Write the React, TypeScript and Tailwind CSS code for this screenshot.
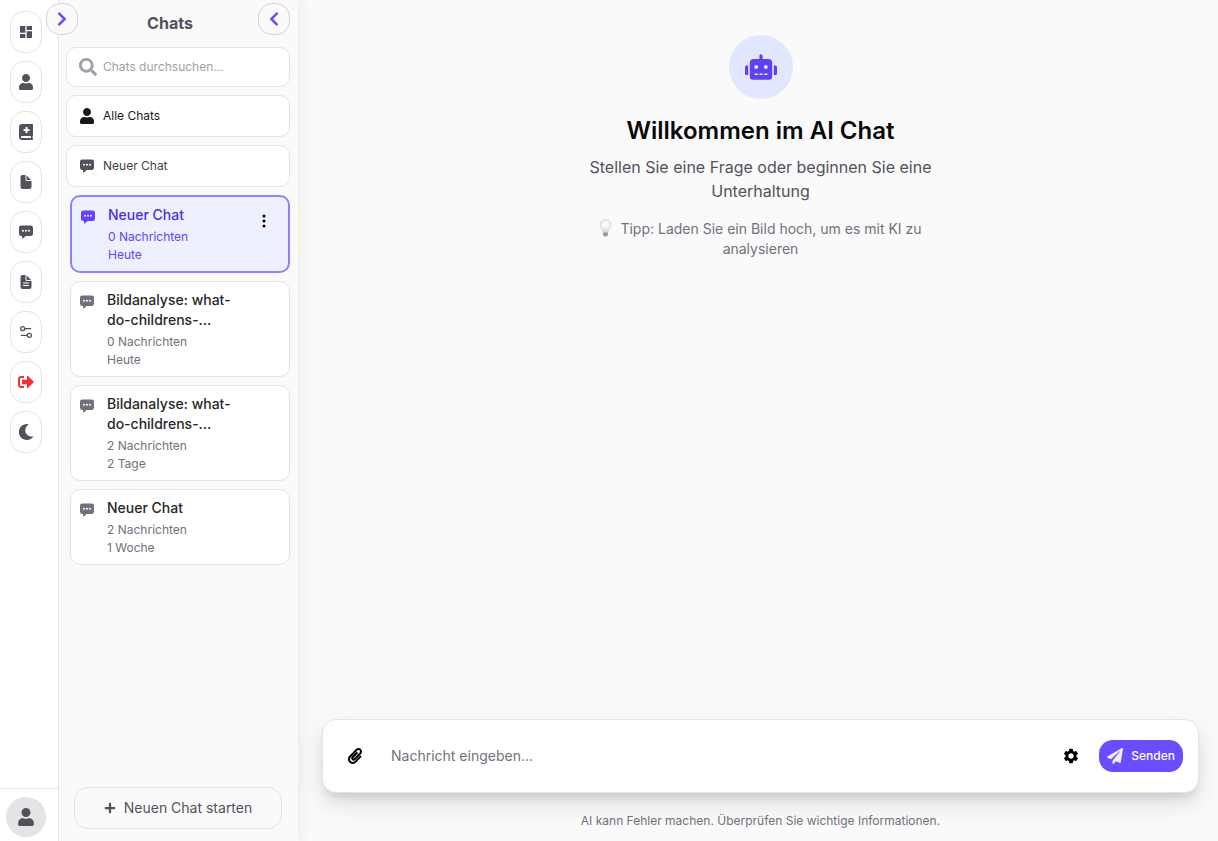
import { useState, type ComponentType } from "react";
import { Settings2 } from "lucide-react";
import { BsThreeDotsVertical } from "react-icons/bs";
import {
  FaBookMedical,
  FaChevronLeft,
  FaChevronRight,
  FaMoon,
  FaPaperclip,
  FaPaperPlane,
  FaPlus,
  FaRobot,
  FaSearch,
  FaSignOutAlt,
  FaUser,
} from "react-icons/fa";
import { IoChatboxEllipses, IoDocument, IoDocumentText } from "react-icons/io5";
import { MdDashboard, MdSettings } from "react-icons/md";

type Icon = ComponentType<{ className?: string }>;

const navItems: { label: string; icon: Icon; color: string }[] = [
  { label: "Dashboard", icon: MdDashboard, color: "text-[#52525c]" },
  { label: "Profil", icon: FaUser, color: "text-[#52525c]" },
  { label: "Bibliothek", icon: FaBookMedical, color: "text-[#52525c]" },
  { label: "Dateien", icon: IoDocument, color: "text-[#52525c]" },
  { label: "Chats", icon: IoChatboxEllipses, color: "text-[#52525c]" },
  { label: "Dokumente", icon: IoDocumentText, color: "text-[#52525c]" },
  { label: "Einstellungen", icon: Settings2, color: "text-[#52525c]" },
  { label: "Abmelden", icon: FaSignOutAlt, color: "text-[#fb2c36]" },
  { label: "Dunkler Modus", icon: FaMoon, color: "text-[#52525c]" },
];

const chats = [
  { id: 1, title: "Neuer Chat", count: "0 Nachrichten", age: "Heute", active: true },
  { id: 2, title: "Bildanalyse: what-do-childrens-...", count: "0 Nachrichten", age: "Heute", active: false },
  { id: 3, title: "Bildanalyse: what-do-childrens-...", count: "2 Nachrichten", age: "2 Tage", active: false },
  { id: 4, title: "Neuer Chat", count: "2 Nachrichten", age: "1 Woche", active: false },
];

function Rail() {
  return (
    <div className="relative z-20 flex w-[58px] shrink-0 flex-col bg-white">
      <nav className="flex flex-1 flex-col gap-2 pt-[11px] pl-[10px]">
        {navItems.map(({ label, icon: NavIcon, color }) => (
          <button
            key={label}
            type="button"
            aria-label={label}
            className={`flex h-[42px] w-8 items-center justify-center rounded-[14px] border border-zinc-200 bg-white ${color}`}
          >
            <NavIcon className="size-4 shrink-0" />
          </button>
        ))}
      </nav>
      <div className="border-t border-zinc-200 pt-2 pb-1 pl-[6px]">
        <button
          type="button"
          aria-label="Konto"
          className="flex size-10 items-center justify-center rounded-full bg-zinc-200 text-[#52525c]"
        >
          <FaUser className="size-[18px]" />
        </button>
      </div>
      <button
        type="button"
        aria-label="Navigation ausklappen"
        className="absolute top-[3px] left-[46px] flex size-8 items-center justify-center rounded-[14px] border border-zinc-300 bg-[#fafafa]"
      >
        <FaChevronRight className="size-4 text-[#6a4dff]" />
      </button>
    </div>
  );
}

function ChatCard({ title, count, age, active }: (typeof chats)[number]) {
  const frame = active ? "border-2 border-[#8b80ff] bg-[#edf1ff]" : "border border-zinc-200 bg-white";
  return (
    <li className={`relative rounded-[10px] px-2 pt-2 pb-[7px] ${frame}`}>
      <button type="button" className="flex w-full items-start gap-3 pr-8 text-left">
        <IoChatboxEllipses
          className={`mt-1 size-4 shrink-0 ${active ? "text-[#6644f5]" : "text-[#71717b]"}`}
        />
        <span className="min-w-0">
          <span className={`block text-sm font-medium ${active ? "text-[#4f2ee0]" : "text-[#27272a]"}`}>
            {title}
          </span>
          <span className={`mt-[3px] block text-xs leading-[18px] ${active ? "text-[#6644f5]" : "text-[#71717b]"}`}>
            <span className="block">{count}</span>
            <span className="block">{age}</span>
          </span>
        </span>
      </button>
      {active && (
        <button
          type="button"
          aria-label="Chat-Optionen"
          className="absolute top-2 right-2 flex size-8 items-center justify-center text-black"
        >
          <BsThreeDotsVertical className="size-4" />
        </button>
      )}
    </li>
  );
}

function ChatPanel() {
  const [query, setQuery] = useState("");
  return (
    <aside className="relative z-10 flex w-[240px] shrink-0 flex-col border-l border-zinc-200 bg-[#fafafa] pr-2 pl-[7px] shadow-[4px_0_12px_rgba(0,0,0,0.06)]">
      <header className="relative flex h-[47px] items-center justify-center pr-4 pb-0.5">
        <h2 className="text-base font-bold text-[#52525c]">Chats</h2>
        <button
          type="button"
          aria-label="Chatliste einklappen"
          className="absolute top-[3px] right-0 flex size-8 items-center justify-center rounded-[14px] border border-zinc-300 bg-[#fafafa]"
        >
          <FaChevronLeft className="size-4 text-[#6a4dff]" />
        </button>
      </header>
      <div className="flex flex-col gap-2">
        <label className="flex h-10 items-center gap-[6px] rounded-[10px] border border-zinc-200 bg-white px-3">
          <FaSearch className="size-[18px] shrink-0 text-[#9f9fa9]" />
          <input
            type="search"
            aria-label="Chats durchsuchen"
            placeholder="Chats durchsuchen..."
            value={query}
            onChange={(e) => setQuery(e.target.value)}
            className="w-full min-w-0 bg-transparent text-xs outline-none placeholder:text-[#9f9fa9]"
          />
        </label>
        <button
          type="button"
          className="flex h-[42px] items-center gap-2 rounded-[10px] border border-zinc-200 bg-white px-3 text-xs text-[#18181b]"
        >
          <FaUser className="size-4" />
          Alle Chats
        </button>
        <button
          type="button"
          className="flex h-[42px] items-center gap-2 rounded-[10px] border border-zinc-200 bg-white px-3 text-xs text-[#3f3f46]"
        >
          <IoChatboxEllipses className="size-4 text-[#52525c]" />
          Neuer Chat
        </button>
      </div>
      <ul className="flex flex-1 flex-col gap-2 pt-2 pl-1">
        {chats.map((chat) => (
          <ChatCard key={chat.id} {...chat} />
        ))}
      </ul>
      <div className="px-2 pb-3">
        <button
          type="button"
          className="flex h-[42px] w-full items-center justify-center gap-2 rounded-[14px] border border-zinc-200 text-sm text-[#52525c]"
        >
          <FaPlus className="size-3" />
          Neuen Chat starten
        </button>
      </div>
    </aside>
  );
}

function LightBulb() {
  return (
    <svg viewBox="0 0 14 20" className="mr-2 inline-block h-[18px] w-[13px] align-[-3px]" aria-hidden="true">
      <defs>
        <radialGradient id="glass" cx="50%" cy="40%" r="60%">
          <stop offset="0" stopColor="#ffffff" />
          <stop offset="0.6" stopColor="#f0f0f0" />
          <stop offset="1" stopColor="#cfcfcf" />
        </radialGradient>
      </defs>
      <path
        d="M7 .6C3.500.6.9 3.200.9 6.500c0 2.300 1.100 3.700 2.100 5.100.7 1 1.300 2 1.400 3.200h5.200c.1-1.200.7-2.200 1.400-3.200 1-1.400 2.100-2.800 2.100-5.100C13.100 3.200 10.500.6 7 .6z"
        fill="url(#glass)"
        stroke="#d0d0d0"
        strokeWidth="0.6"
      />
      <path d="M5.400 8.500l.9 6h1.400l.9-6" fill="none" stroke="#d8d8d8" strokeWidth="0.5" />
      <path d="M4.400 14.800h5.200v3c0 .6-.5 1-1 1.200L7.800 19.600H6.200L5.400 19c-.5-.2-1-.6-1-1.200z" fill="#a9a9a9" />
      <path d="M4.400 16.200h5.200M4.600 17.800h4.800" stroke="#7c7c7c" strokeWidth="0.6" />
    </svg>
  );
}

function Conversation() {
  const [message, setMessage] = useState("");
  return (
    <main className="flex min-w-0 flex-1 flex-col bg-[#fafafa] pr-[19px] pl-6">
      <section className="flex flex-1 flex-col items-center pt-[35px] text-center">
        <div className="flex size-16 items-center justify-center rounded-full bg-[#e0e7ff]">
          <FaRobot className="size-8 text-[#6040f0]" />
        </div>
        <h1 className="mt-4 text-2xl font-semibold text-[#09090b]">Willkommen im AI Chat</h1>
        <p className="mt-2 max-w-sm text-base text-[#52525c]">
          Stellen Sie eine Frage oder beginnen Sie eine Unterhaltung
        </p>
        <p className="mt-4 max-w-sm text-sm text-[#71717b]">
          <LightBulb />
          Tipp: Laden Sie ein Bild hoch, um es mit KI zu analysieren
        </p>
      </section>
      <form
        onSubmit={(e) => e.preventDefault()}
        className="flex h-[74px] items-center rounded-[14px] border border-zinc-200 bg-white pr-[15px] pl-4 shadow-[0_8px_10px_-4px_rgba(0,0,0,0.1),0_10px_24px_rgba(0,0,0,0.12)]"
      >
        <button type="button" aria-label="Datei anhängen" className="flex size-8 items-center justify-center text-black">
          <FaPaperclip className="size-4" />
        </button>
        <input
          type="text"
          aria-label="Nachricht"
          placeholder="Nachricht eingeben..."
          value={message}
          onChange={(e) => setMessage(e.target.value)}
          className="h-10 min-w-0 flex-1 bg-transparent px-5 pb-0.5 text-sm outline-none placeholder:text-[#71717b]"
        />
        <button type="button" aria-label="Einstellungen" className="flex size-8 items-center justify-center text-black">
          <MdSettings className="size-[18px]" />
        </button>
        <button
          type="submit"
          className="ml-3 flex h-8 items-center gap-2 rounded-[14px] bg-[#6a4dff] px-2 text-xs font-medium text-white"
        >
          <FaPaperPlane className="size-4 text-[#f0edff]" />
          Senden
        </button>
      </form>
      <p className="mt-5 mb-3 text-center text-xs text-[#71717b]">
        AI kann Fehler machen. Überprüfen Sie wichtige Informationen.
      </p>
    </main>
  );
}

export default function App() {
  return (
    <div className="flex min-h-screen bg-[#fafafa] font-['Inter','Liberation_Sans',sans-serif]">
      <Rail />
      <ChatPanel />
      <Conversation />
    </div>
  );
}
